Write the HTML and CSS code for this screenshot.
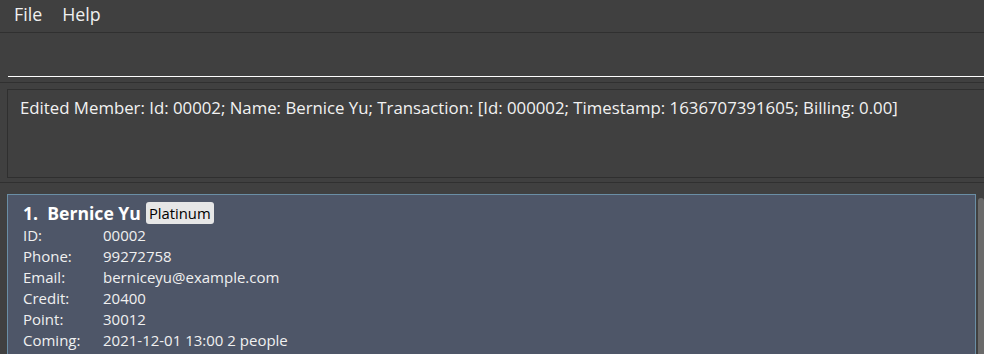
FILE: index.html
```html
<!DOCTYPE html>
<html>
<head>
<meta charset="utf-8">
<link rel="stylesheet" href="styles.css">
</head>
<body>
<div class="app">
  <div class="menubar">
    <span class="menu">File</span>
    <span class="menu">Help</span>
  </div>
  <div class="command">
    <div class="input"></div>
  </div>
  <div class="result-wrap">
    <div class="result">Edited Member: Id: 00002; Name: Bernice Yu; Transaction: [Id: 000002; Timestamp: 1636707391605; Billing: 0.00]</div>
  </div>
  <div class="list">
    <div class="card">
      <div class="title"><span class="name">1.&nbsp; Bernice Yu</span><span class="badge">Platinum</span></div>
      <div class="row"><span class="label">ID:</span><span>00002</span></div>
      <div class="row"><span class="label">Phone:</span><span>99272758</span></div>
      <div class="row"><span class="label">Email:</span><span>berniceyu@example.com</span></div>
      <div class="row"><span class="label">Credit:</span><span>20400</span></div>
      <div class="row"><span class="label">Point:</span><span>30012</span></div>
      <div class="row"><span class="label">Coming:</span><span>2021-12-01 13:00 2 people</span></div>
    </div>
    <div class="scrollbar"></div>
  </div>
</div>
</body>
</html>
```
FILE: styles.css
```css
html, body {
  margin: 0;
  padding: 0;
  background: #404040;
  overflow: hidden;
}
body {
  width: 984px;
  height: 354px;
  font-family: "Open Sans", sans-serif;
  color: #ffffff;
}
.app {
  display: flex;
  flex-direction: column;
  height: 354px;
}
.app > div {
  flex-shrink: 0;
}
.menubar {
  height: 33px;
  box-sizing: border-box;
  border-bottom: 1px solid #303030;
  display: flex;
  align-items: flex-start;
  padding: 2px 0 0 14px;
  gap: 20px;
  font-size: 17.8px;
  line-height: 24px;
  color: #f0f0f0;
}
.command {
  height: 49px;
  border-bottom: 1px solid #303030;
  padding-left: 8px;
  display: flex;
  flex-direction: column;
  justify-content: flex-start;
}
.input {
  margin-top: 43px;
  height: 1px;
  background: #ffffff;
}
.result-wrap {
  padding: 6px 0 4px 7px;
  border-bottom: 1px solid #303030;
}
.result {
  height: 89px;
  border: 1px solid #2f2f2f;
  border-right: none;
  padding: 6px 12px;
  box-sizing: border-box;
  font-size: 16.8px;
  line-height: 23px;
  color: #f2f2f2;
  white-space: nowrap;
}
.list {
  display: flex;
  padding: 11px 0 0 7px;
  gap: 2px;
}
.card {
  width: 970px;
  box-sizing: border-box;
  height: 170px;
  background: #4e5668;
  border: 1px solid #6a8ea5;
  padding: 5px 0 0 15px;
}
.title {
  display: flex;
  align-items: center;
  height: 25px;
}
.name {
  font-weight: 700;
  font-size: 17.6px;
  margin-right: 5px;
}
.badge {
  background: #e6e6e6;
  color: #000;
  font-size: 14.8px;
  border-radius: 3px;
  padding: 0 3px;
  height: 22px;
  line-height: 22px;
}
.row {
  display: flex;
  font-size: 15px;
  line-height: 21px;
  color: #f0f0f0;
}
.label {
  width: 80px;
}
.scrollbar {
  margin-top: 4px;
  width: 6px;
  height: 160px;
  background: #6a6a6a;
  border-radius: 3px;
}
```
